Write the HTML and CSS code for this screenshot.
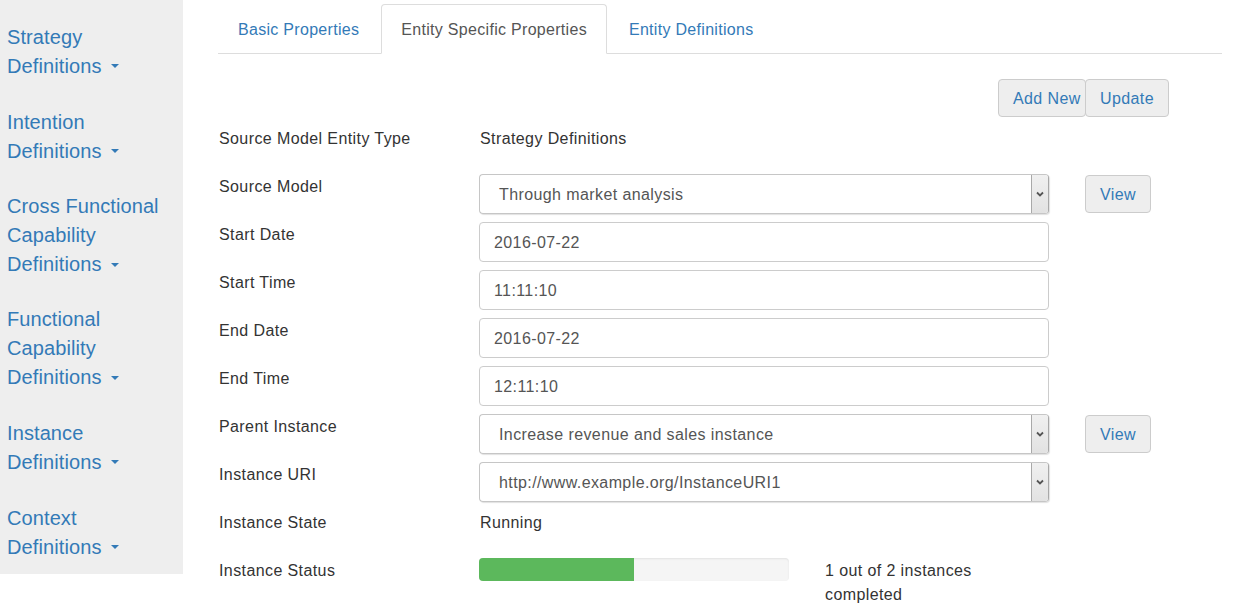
FILE: index.html
```html
<!DOCTYPE html>
<html lang="en">
<head>
<meta charset="utf-8">
<title>Entity Specific Properties</title>
<link rel="stylesheet" href="styles.css">
</head>
<body>
<div class="layout">
  <nav class="sidebar">
    <div class="group"><a href="#">Strategy<br>Definitions<span class="caret"></span></a></div>
    <div class="group"><a href="#">Intention<br>Definitions<span class="caret"></span></a></div>
    <div class="group"><a href="#">Cross Functional<br>Capability<br>Definitions<span class="caret"></span></a></div>
    <div class="group"><a href="#">Functional<br>Capability<br>Definitions<span class="caret"></span></a></div>
    <div class="group"><a href="#">Instance<br>Definitions<span class="caret"></span></a></div>
    <div class="group"><a href="#">Context<br>Definitions<span class="caret"></span></a></div>
  </nav>
  <main class="main">
    <ul class="tabs">
      <li><a href="#" class="tab">Basic Properties</a></li>
      <li><a href="#" class="tab active">Entity Specific Properties</a></li>
      <li><a href="#" class="tab">Entity Definitions</a></li>
    </ul>
    <div class="toolbar">
      <button class="btn btn-add">Add New</button><button class="btn btn-update">Update</button>
    </div>
    <div class="form">
      <div class="label">Source Model Entity Type</div>
      <div class="value">Strategy Definitions</div>
      <div class="gap"></div><div></div>

      <div class="label">Source Model</div>
      <div class="select"><span class="sel-text">Through market analysis</span><span class="sel-arrow"><svg width="8" height="6" viewBox="0 0 8 6"><path d="M1 1.5 L4 4.5 L7 1.5" fill="none" stroke="#555" stroke-width="1.8"/></svg></span></div>
      <div class="gap"></div>
      <div><button class="btn btn-view">View</button></div>

      <div class="label">Start Date</div>
      <div class="input">2016-07-22</div>
      <div class="gap"></div><div></div>

      <div class="label">Start Time</div>
      <div class="input">11:11:10</div>
      <div class="gap"></div><div></div>

      <div class="label">End Date</div>
      <div class="input">2016-07-22</div>
      <div class="gap"></div><div></div>

      <div class="label">End Time</div>
      <div class="input">12:11:10</div>
      <div class="gap"></div><div></div>

      <div class="label">Parent Instance</div>
      <div class="select"><span class="sel-text">Increase revenue and sales instance</span><span class="sel-arrow"><svg width="8" height="6" viewBox="0 0 8 6"><path d="M1 1.5 L4 4.5 L7 1.5" fill="none" stroke="#555" stroke-width="1.8"/></svg></span></div>
      <div class="gap"></div>
      <div><button class="btn btn-view">View</button></div>

      <div class="label">Instance URI</div>
      <div class="select"><span class="sel-text">http://www.example.org/InstanceURI1</span><span class="sel-arrow"><svg width="8" height="6" viewBox="0 0 8 6"><path d="M1 1.5 L4 4.5 L7 1.5" fill="none" stroke="#555" stroke-width="1.8"/></svg></span></div>
      <div class="gap"></div><div></div>

      <div class="label">Instance State</div>
      <div class="value">Running</div>
      <div class="gap"></div><div></div>

      <div class="label">Instance Status</div>
      <div class="status">
        <div class="progress"><div class="bar" style="width:50%"></div></div>
        <div class="status-text">1 out of 2 instances completed</div>
      </div>
    </div>
  </main>
</div>
</body>
</html>
```

FILE: styles.css
```css
html, body {
  margin: 0;
  padding: 0;
  background: #fff;
}
body {
  font-family: "Liberation Sans", Arial, sans-serif;
  font-size: 16px;
  letter-spacing: 0.4px;
  color: #333;
}
.layout {
  display: flex;
  align-items: flex-start;
}
.sidebar {
  width: 183px;
  flex: none;
  background: #eeeeee;
  padding: 9px 0 0;
  letter-spacing: 0.1px;
}
.group {
  padding: 13.5px 7px;
}
.group:nth-child(3), .group:nth-child(4) {
  padding: 13px 7px;
}
.group:last-child {
  padding-bottom: 12.5px;
}
.group a {
  display: block;
  font-size: 20px;
  line-height: 29px;
  color: #337ab7;
  text-decoration: none;
}
.caret {
  display: inline-block;
  width: 0;
  height: 0;
  margin-left: 10px;
  vertical-align: middle;
  border-top: 4px solid #337ab7;
  border-left: 4px solid transparent;
  border-right: 4px solid transparent;
  position: relative;
  top: -1px;
}
.main {
  flex: 1;
  margin: 0 34px 0 35px;
  min-width: 0;
}
.tabs {
  list-style: none;
  margin: 0;
  padding: 4px 0 0;
  display: flex;
  border-bottom: 1px solid #ddd;
}
.tabs li {
  margin-bottom: -1px;
  margin-right: 2px;
}
.tab {
  display: block;
  padding: 14px 19px 11px;
  line-height: 22.86px;
  letter-spacing: 0.3px;
  border: 1px solid transparent;
  border-radius: 4px 4px 0 0;
  color: #337ab7;
  text-decoration: none;
}
.tab.active {
  color: #555;
  background: #fff;
  border-color: #ddd;
  border-bottom-color: transparent;
}
.toolbar {
  display: flex;
  justify-content: flex-end;
  padding: 25px 53px 0 0;
}
.btn {
  font-family: inherit;
  font-size: 16px;
  letter-spacing: 0.4px;
  line-height: 22px;
  padding: 8px 13px 6px;
  color: #337ab7;
  background: #eeeeee;
  border: 1px solid #cccccc;
  border-radius: 4px;
  cursor: pointer;
  text-align: left;
  box-sizing: border-box;
  height: 38px;
}
.btn-add {
  width: 88px;
  padding-left: 14px;
  padding-right: 0;
  white-space: nowrap;
}
.btn-update {
  margin-left: -1px;
  width: 84px;
  padding-left: 14px;
  padding-right: 0;
}
.btn-view {
  margin-top: 1px;
  width: 66px;
  padding-left: 14px;
  padding-right: 0;
}
.form {
  display: grid;
  grid-template-columns: 261px 570px 36px auto;
  grid-auto-rows: minmax(40px, auto);
  row-gap: 8px;
  margin-top: 9px;
}
.label, .value {
  line-height: 23px;
  padding-top: 1px;
  padding-left: 1px;
}
.input {
  box-sizing: border-box;
  height: 40px;
  border: 1px solid #ccc;
  border-radius: 4px;
  padding: 1px 14px 0;
  line-height: 38px;
  color: #555;
}
.select {
  box-sizing: border-box;
  height: 40px;
  border: 1px solid #c6c6c6;
  border-right-color: #a8a8a8;
  border-radius: 4px;
  display: flex;
  align-items: stretch;
  color: #555;
  box-shadow: 1px 1px 1px rgba(0,0,0,0.12);
  overflow: hidden;
}
.sel-text {
  flex: 1;
  padding: 1px 0 0 19px;
  line-height: 38px;
}
.sel-arrow {
  width: 16px;
  border-left: 1px solid #a9a9a9;
  background: linear-gradient(#f0f0f0, #e2e2e2);
  display: flex;
  align-items: center;
  justify-content: center;
}
.status {
  grid-column: 2 / 5;
  display: flex;
  align-items: flex-start;
}
.progress {
  width: 310px;
  height: 23px;
  background: #f5f5f5;
  border-radius: 4px;
  overflow: hidden;
  box-shadow: inset 0 1px 2px rgba(0,0,0,0.08);
  margin-right: 36px;
  flex: none;
}
.bar {
  height: 100%;
  background: #5cb85c;
}
.status-text {
  width: 170px;
  line-height: 24px;
  padding-top: 1px;
  color: #333;
}
```
